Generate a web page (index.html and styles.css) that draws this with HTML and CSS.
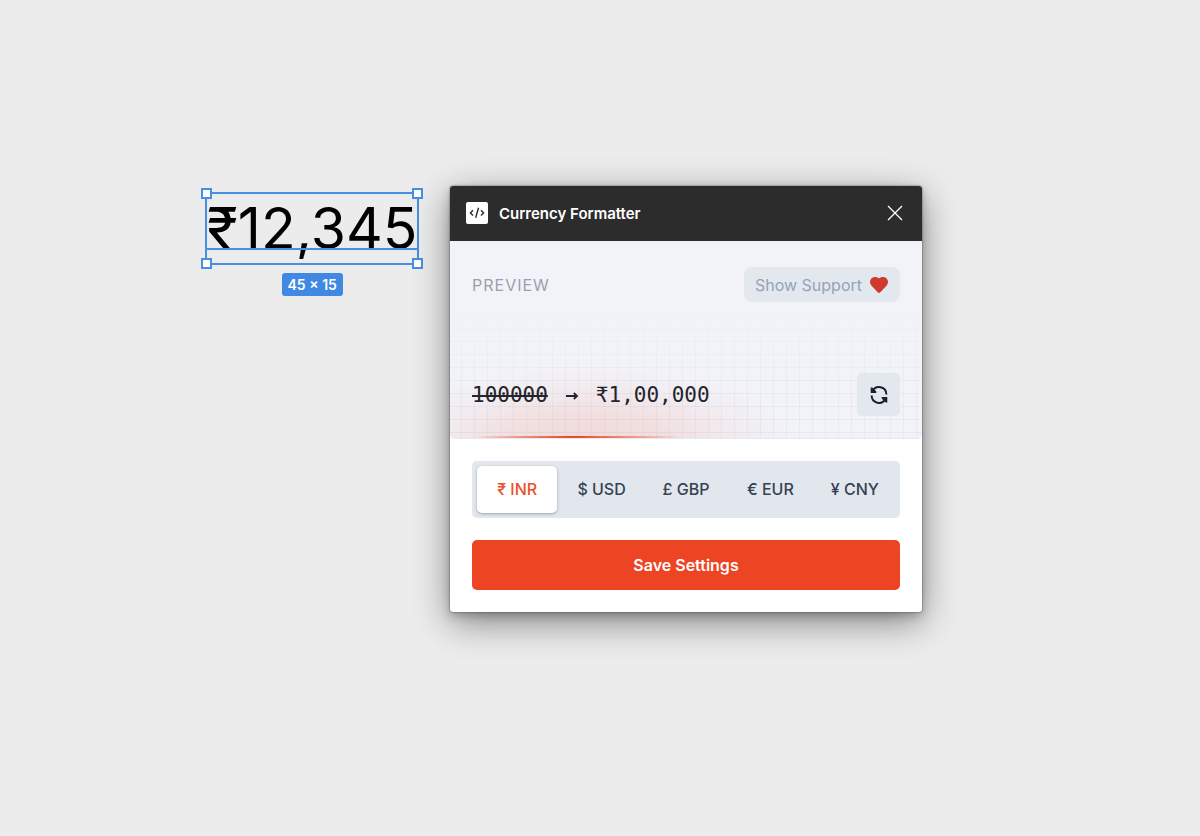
FILE: index.html
```html
<!DOCTYPE html>
<html lang="en">
<head>
    <meta charset="UTF-8">
    <meta name="viewport" content="width=device-width, initial-scale=1.0">
    <title>Currency Formatter</title>
    <link rel="stylesheet" href="styles.css">
</head>
<body>
    <main class="canvas">
        <!-- selected text layer -->
        <div class="layer">
            <div class="layer-box">
                <span class="layer-text">₹12,345</span>
                <span class="baseline"></span>
                <span class="handle top left"></span>
                <span class="handle top right"></span>
                <span class="handle bottom left"></span>
                <span class="handle bottom right"></span>
            </div>
            <span class="layer-size">45 × 15</span>
        </div>

        <section class="plugin">
            <header class="plugin-header">
                <svg class="logo" viewBox="0 0 22 22" aria-hidden="true">
                    <rect width="22" height="22" rx="2" fill="#fff"/>
                    <path d="M7 8.200 4.400 10.900 7 13.600M15 8.200 17.600 10.900 15 13.600M12.500 5.800 9.700 15.800" fill="none" stroke="#2c2c2c" stroke-width="1.400"/>
                </svg>
                <h1>Currency Formatter</h1>
                <button type="button" class="close" aria-label="Close">
                    <svg viewBox="0 0 16 16" width="16" height="16">
                        <path d="M1 1l14 14M15 1L1 15" stroke="#fff" stroke-width="1.3"/>
                    </svg>
                </button>
            </header>

            <div class="preview">
                <div class="preview-top">
                    <h2>PREVIEW</h2>
                    <a class="support" href="#">Show Support
                        <svg viewBox="0 0 18 16" width="18" height="16" aria-hidden="true">
                            <path d="M9 16C8.500 16 7.800 15.200 6.500 13.900L1.500 8.700C-.5 6.600-.5 3.500 1.400 1.500 3.300-.5 6.900-.5 9 1.500 11.100-.5 14.700-.5 16.600 1.500 18.500 3.500 18.500 6.600 16.500 8.700L11.500 13.900C10.200 15.200 9.500 16 9 16z" fill="#cf3a2c"/>
                        </svg>
                    </a>
                </div>
                <div class="preview-bottom">
                    <p class="sample">
                        <del>100000</del>
                        <svg viewBox="0 0 14 10" width="14" height="10" role="img" aria-label="to">
                            <path d="M1 6h11M8.800 3 12 6 8.800 9" fill="none" stroke="#23252d" stroke-width="1.8"/>
                        </svg>
                        <span>₹1,00,000</span>
                    </p>
                    <button type="button" class="refresh" aria-label="Refresh">
                        <svg viewBox="0 0 18 18" width="18" height="18">
                            <g fill="none" stroke="#1b202b" stroke-width="2">
                                <path d="M2.400 5.200A7.400 7.400 0 0 1 16.400 8.400"/>
                                <path d="M15.600 12.800A7.400 7.400 0 0 1 1.600 9.600"/>
                            </g>
                            <path d="M.7 1.500V7H6.300V5.500L2.300 1.500zM17.300 16.500V11H11.700V12.500L15.700 16.500z" fill="#1b202b"/>
                        </svg>
                    </button>
                </div>
            </div>

            <form class="settings">
                <div class="tabs">
                    <label><input type="radio" name="currency" value="inr" checked><span>₹ INR</span></label>
                    <label><input type="radio" name="currency" value="usd"><span>$ USD</span></label>
                    <label><input type="radio" name="currency" value="gbp"><span>£ GBP</span></label>
                    <label><input type="radio" name="currency" value="eur"><span>€ EUR</span></label>
                    <label><input type="radio" name="currency" value="cny"><span>¥ CNY</span></label>
                </div>
                <button type="button" class="save">Save Settings</button>
            </form>
        </section>
    </main>
</body>
</html>
```
FILE: styles.css
```css
* {
    box-sizing: border-box;
}

body {
    margin: 0;
    background-color: #ececec;
    font-family: Inter, "Liberation Sans", sans-serif;
    font-size: 16px;
}

h1, h2, p {
    margin: 0;
}

button {
    border: none;
    padding: 0;
    font-family: inherit;
    cursor: pointer;
}

svg {
    display: block;
    flex: none;
}

.canvas {
    position: relative;
    min-height: 100vh;
    overflow: hidden;
}

/* Text layer */
.layer {
    position: absolute;
    left: 205px;
    top: 192px;
    display: flex;
    flex-direction: column;
    align-items: center;
    gap: 8px;
}

.layer-box {
    position: relative;
    border: 2px solid #478fe3;
}

.layer-text {
    display: block;
    font-size: 57px;
    line-height: 69px;
    color: #000;
}

.baseline {
    position: absolute;
    left: 0;
    right: 0;
    bottom: 13px;
    height: 2px;
    background-color: #478fe3;
}

.handle {
    position: absolute;
    width: 11px;
    height: 11px;
    background-color: #fff;
    border: 2px solid #478fe3;
}

.top { top: -6px; }
.bottom { bottom: -6px; }
.left { left: -6px; }
.right { right: -6px; }

.layer-size {
    padding: 0 6px;
    border-radius: 3px;
    background-color: #3f88e4;
    color: #fff;
    font-size: 14px;
    font-weight: 600;
    line-height: 23px;
}

/* Plugin window */
.plugin {
    position: absolute;
    left: 450px;
    top: 186px;
    width: 472px;
    border-radius: 3px;
    background-color: #fff;
    overflow: hidden;
    box-shadow: 0 0 2px rgba(0, 0, 0, 0.6), 0 4px 10px rgba(0, 0, 0, 0.2), 0 10px 36px rgba(0, 0, 0, 0.45);
}

.plugin-header {
    display: flex;
    align-items: center;
    gap: 11px;
    height: 54px;
    padding: 0 16px;
    background-color: #2c2c2c;
    color: #fff;
}

.logo {
    width: 22px;
    height: 22px;
}

.plugin-header h1 {
    flex: 1;
    font-size: 15px;
    font-weight: 600;
}

.close {
    padding: 3px;
    background: none;
}

.preview {
    position: relative;
    display: flex;
    flex-direction: column;
    justify-content: space-between;
    height: 199px;
    padding: 26px 22px 22px;
    border: solid #e6e8ef;
    border-width: 1px 0;
    border-top-color: #2c2c2c;
    border-radius: 0 0 5px 5px;
    background-color: #f2f3f9;
    overflow: hidden;
}

/* graph paper, fading out upwards */
.preview::before {
    content: "";
    position: absolute;
    inset: 0;
    background-image:
        linear-gradient(rgba(100, 110, 140, 0.07) 1px, transparent 1px),
        linear-gradient(90deg, rgba(100, 110, 140, 0.06) 1px, transparent 1px);
    background-size: 13px 13px;
    background-position: 11px 9px;
    -webkit-mask-image: linear-gradient(transparent 30%, #000 80%);
    mask-image: linear-gradient(transparent 30%, #000 80%);
}

/* red glow */
.preview::after {
    content: "";
    position: absolute;
    inset: 0;
    background:
        linear-gradient(90deg, transparent 5%, #e64524 26%, transparent 49%) bottom / 100% 2px no-repeat,
        radial-gradient(210px 84px at 29% 105%, rgba(238, 80, 40, 0.16), rgba(238, 80, 40, 0.12) 40%, rgba(238, 80, 40, 0.04) 75%, transparent);
}

.preview-top,
.preview-bottom {
    position: relative;
    z-index: 1;
    display: flex;
    align-items: center;
    justify-content: space-between;
}

.preview h2 {
    color: #9a9fad;
    font-size: 16px;
    font-weight: 400;
    letter-spacing: 1px;
}

.support {
    display: flex;
    align-items: center;
    gap: 8px;
    height: 35px;
    padding: 0 12px 0 11px;
    border-radius: 8px;
    background-color: #e3e8ef;
    color: #94a3b8;
    text-decoration: none;
}

.sample {
    display: flex;
    align-items: center;
    gap: 17px;
    color: #23252d;
    font-family: "DejaVu Sans Mono", monospace;
    font-size: 21px;
}

.sample del {
    text-decoration-thickness: 2px;
}

.refresh {
    display: flex;
    align-items: center;
    justify-content: center;
    width: 43px;
    height: 43px;
    border-radius: 5px;
    background-color: #e3e8ef;
}

.settings {
    display: grid;
    gap: 22px;
    padding: 22px;
}

.tabs {
    display: grid;
    grid-template-columns: repeat(5, 1fr);
    gap: 4px;
    padding: 5px;
    border-radius: 5px;
    background-color: #e2e7ee;
}

.tabs label {
    position: relative;
    cursor: pointer;
}

.tabs input {
    position: absolute;
    inset: 0;
    margin: 0;
    opacity: 0;
}

.tabs span {
    display: block;
    border-radius: 5px;
    color: #364152;
    font-weight: 500;
    line-height: 47px;
    text-align: center;
}

.tabs input:checked + span {
    background-color: #fff;
    color: #ea512b;
    box-shadow: 0 1px 3px rgba(30, 41, 59, 0.35);
}

.save {
    height: 50px;
    border-radius: 5px;
    background-color: #ed4424;
    color: #fff;
    font-size: 16px;
    font-weight: 600;
}
```
